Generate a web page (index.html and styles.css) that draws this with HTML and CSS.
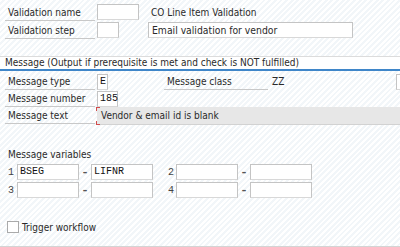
FILE: index.html
```html
<!DOCTYPE html>
<html lang="en">
<head>
    <meta charset="UTF-8">
    <title>Validation</title>
    <link rel="stylesheet" href="styles.css">
</head>
<body>
    <!-- header fields -->
    <div class="top">
        <div class="row">
            <div class="lbl">Validation name</div>
            <div class="box w-name"></div>
            <div class="desc">CO Line Item Validation</div>
        </div>
        <div class="row">
            <div class="lbl">Validation step</div>
            <div class="box w-step"></div>
            <div class="box w-text">Email validation for vendor</div>
        </div>
    </div>

    <!-- message section -->
    <div class="section">
        <div class="sec-title">Message (Output if prerequisite is met and check is NOT fulfilled)</div>
        <div class="sec-body">
            <div class="row">
                <div class="lbl">Message type</div>
                <div class="box w-type mono">E</div>
                <div class="lbl lbl-class">Message class</div>
                <div class="val">ZZ</div>
                <div class="box w-edge"></div>
            </div>
            <div class="row">
                <div class="lbl">Message number</div>
                <div class="box w-num mono">185</div>
            </div>
            <div class="row">
                <div class="lbl">Message text</div>
                <div class="msgtext">Vendor &amp; email id is blank</div>
            </div>

            <div class="vars-title">Message variables</div>
            <div class="vars">
                <div class="vrow">
                    <span class="num">1</span>
                    <div class="box w-var mono">BSEG</div>
                    <span class="dash">–</span>
                    <div class="box w-var mono">LIFNR</div>
                    <span class="num num2">2</span>
                    <div class="box w-var"></div>
                    <span class="dash">–</span>
                    <div class="box w-var"></div>
                </div>
                <div class="vrow">
                    <span class="num">3</span>
                    <div class="box w-var"></div>
                    <span class="dash">–</span>
                    <div class="box w-var"></div>
                    <span class="num num2">4</span>
                    <div class="box w-var"></div>
                    <span class="dash">–</span>
                    <div class="box w-var"></div>
                </div>
            </div>

            <label class="check">
                <span class="cbox"></span>
                Trigger workflow
            </label>
        </div>
    </div>
</body>
</html>
```

FILE: styles.css
```css
body {
    margin: 0;
    width: 400px;
    height: 247px;
    overflow: hidden;
    box-sizing: border-box;
    border-bottom: 1px solid #d4d4d4;
    font-family: "DejaVu Sans Condensed", "DejaVu Sans", sans-serif;
    font-stretch: condensed;
    font-size: 10px;
    color: #2a2a2a;
    background: repeating-linear-gradient(135deg, #ffffff 0, #ffffff 2px, #f2f6f9 2px, #f2f6f9 4px);
}

/* header fields */
.top {
    padding: 3px 0 0 5px;
}

.row {
    display: flex;
    align-items: center;
    height: 18px;
}

.lbl {
    width: 90px;
    height: 17px;
    line-height: 17px;
    padding-left: 3px;
    box-sizing: border-box;
    border-bottom: 1px solid #c8c8c8;
    margin-right: 2px;
}

.box {
    height: 16px;
    line-height: 14px;
    box-sizing: border-box;
    border: 1px solid #c4c4c4;
    border-bottom-color: #d8d8d8;
    background: #fff;
    padding-left: 2px;
}

.mono {
    font-family: "Liberation Mono", "Courier New", monospace;
    font-stretch: normal;
    font-size: 10px;
    color: #111;
}

.w-name { width: 42px; }
.w-step { width: 22px; }
.w-text { width: 205px; margin-left: 29px; padding-left: 3px; font-size: 10.3px; }
.w-type { width: 11px; }
.w-num { width: 21px; }
.w-var { width: 62px; }
.w-edge { width: 10px; margin-left: auto; margin-right: -6px; }

.desc {
    margin-left: 12px;
}

/* message section */
.section {
    margin-top: 17px;
}

.sec-title {
    height: 12px;
    line-height: 12px;
    padding-left: 5px;
    background: #fff;
    border-top: 1px solid #dcdcdc;
    border-bottom: 2px solid #3f86c9;
}

.sec-body {
    padding: 2px 0 0 5px;
}

.sec-body .row {
    height: 17px;
}

.lbl-class {
    width: 104px;
    margin-left: 56px;
}

.val {
    margin-left: 2px;
}

.msgtext {
    position: relative;
    flex: 1;
    height: 17px;
    line-height: 17px;
    padding-left: 4px;
    background: #e7e7e7;
    border-bottom: 1px solid #d2d2d2;
}

/* red required marks on the left corners */
.msgtext::before,
.msgtext::after {
    content: "";
    position: absolute;
    left: -1px;
    width: 3px;
    height: 3px;
    border-left: 1px solid #d24b4b;
}

.msgtext::before {
    top: 0;
    border-top: 1px solid #d24b4b;
}

.msgtext::after {
    bottom: -1px;
    border-bottom: 1px solid #d24b4b;
}

.vars-title {
    margin-top: 24px;
    padding-left: 3px;
    height: 14px;
    line-height: 14px;
}

.vars {
    margin-top: 1px;
}

.vrow {
    display: flex;
    align-items: center;
    height: 18px;
}

.num {
    width: 12px;
    box-sizing: border-box;
    padding-left: 3px;
    font-family: "Liberation Mono", monospace;
    font-stretch: normal;
    color: #444;
}

.num2 {
    margin-left: 11px;
    padding-left: 4px;
}

.dash {
    width: 12px;
    text-align: center;
    font-weight: bold;
    color: #555;
}

.check {
    display: flex;
    align-items: center;
    gap: 3px;
    margin-top: 22px;
    padding-left: 2px;
}

.cbox {
    width: 10px;
    height: 10px;
    border: 1px solid #aaa;
    background: #fff;
}
```
